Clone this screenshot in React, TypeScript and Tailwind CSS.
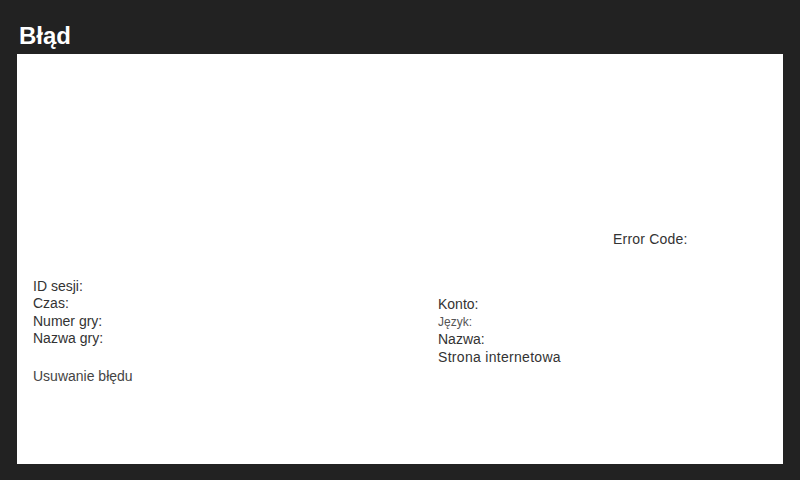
import React from 'react';

const font = { fontFamily: '"Liberation Sans", Arial, sans-serif' };

const App: React.FC = () => {
  return (
    <div className="w-[800px] h-[480px] bg-[#222222] overflow-hidden" style={font}>
      {/* Nagłówek */}
      <div className="h-[54px] pl-[19px] pt-[22px]">
        <h1 className="text-[24px] leading-[28px] font-bold text-white">Błąd</h1>
      </div>

      {/* Panel */}
      <div className="mx-[17px] h-[410px] bg-white text-[14px] leading-[17.6px] text-[#333333]">
        <div className="pt-[177px] pl-[596px] tracking-[0.2px]">Error Code:</div>

        <div className="mt-[29px] grid grid-cols-[405px_1fr] pl-[16px]">
          <div>
            <div>ID sesji:</div>
            <div>Czas:</div>
            <div>Numer gry:</div>
            <div>Nazwa gry:</div>
            <div className="mt-[20.5px] text-[#444444]">Usuwanie błędu</div>
          </div>
          <div className="pt-[18.5px]">
            <div>Konto:</div>
            <div className="text-[12px] text-[#555555]">Język:</div>
            <div>Nazwa:</div>
            <div className="tracking-[0.3px]">Strona internetowa</div>
          </div>
        </div>
      </div>
    </div>
  );
};

export default App;
